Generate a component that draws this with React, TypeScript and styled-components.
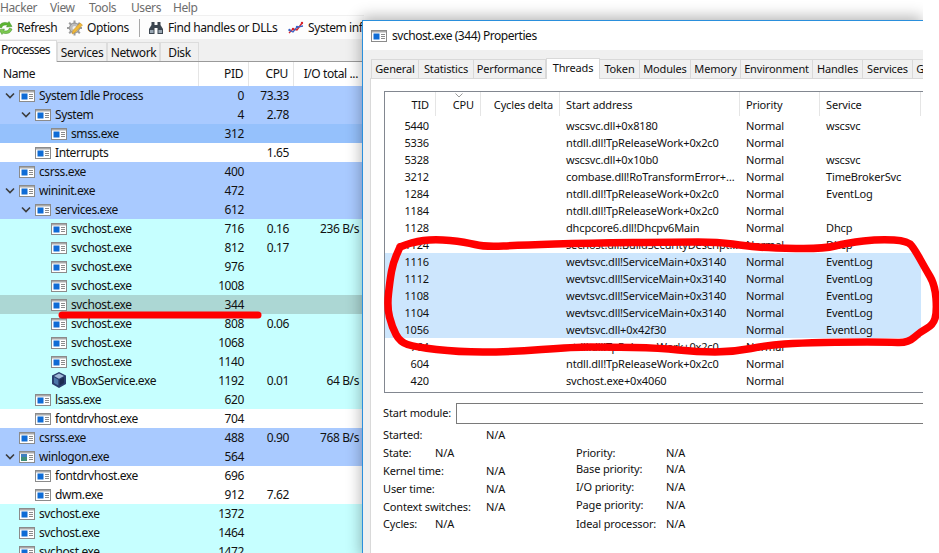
import React from 'react';
import styled, { createGlobalStyle } from 'styled-components';

const Global = createGlobalStyle`
  html, body { margin: 0; padding: 0; background: #fff; }
  #root { width: 939px; height: 553px; overflow: hidden; }
`;

const Screen = styled.div`
  position: relative;
  width: 939px;
  height: 553px;
  overflow: hidden;
  background: #fff;
  font-family: "Noto Sans", "Open Sans", sans-serif;
  color: #111;
`;

/* ---------- main window ---------- */
const MainWindow = styled.div`
  width: 364px;
  height: 553px;
  display: flex;
  flex-direction: column;
  overflow: hidden;
  font-size: 12px;
  letter-spacing: -0.4px;
`;
const MenuBar = styled.div`
  display: flex;
  flex: none;
  height: 15px;
  align-items: center;
  color: #6d6d6d;
  font-size: 12px;
  line-height: 14px;
`;
const MenuItem = styled.span<{ $w: number }>`
  width: ${p => p.$w}px;
  flex: none;
`;
const Toolbar = styled.div`
  display: flex;
  flex: none;
  align-items: center;
  box-sizing: border-box;
  height: 24px;
  background: #fdfdfd;
  border-top: 1px solid #f0f0f0;
`;
const ToolButton = styled.div<{ $w: number; $pad: number; $gap: number }>`
  flex: none;
  width: ${p => p.$w}px;
  display: flex;
  align-items: center;
  gap: ${p => p.$gap}px;
  padding-left: ${p => p.$pad}px;
  box-sizing: border-box;
  white-space: nowrap;
  overflow: hidden;
`;
const ToolSeparator = styled.div`
  flex: none;
  width: 1px;
  height: 18px;
  background: #a8a8a8;
`;
const TabStrip = styled.div`
  display: flex;
  flex: none;
  align-items: flex-end;
  box-sizing: border-box;
  height: 23px;
  background: #f0f0f0;
  border-bottom: 1px solid #9a9a9a;
`;
const MainTab = styled.div<{ $w: number; $active?: boolean }>`
  flex: none;
  width: ${p => p.$w}px;
  box-sizing: border-box;
  height: ${p => (p.$active ? 22 : 19)}px;
  margin-bottom: ${p => (p.$active ? -1 : 0)}px;
  background: ${p => (p.$active ? '#fff' : '#f0f0f0')};
  border: 1px solid #dcdcdc;
  border-bottom: none;
  ${p => (p.$active ? 'border-left: none; padding-left: 1px; letter-spacing: -0.8px;' : '')}
  text-align: ${p => (p.$active ? 'left' : 'center')};
  line-height: ${p => (p.$active ? 17 : 19)}px;
  position: relative;
  white-space: nowrap;
`;
const TreeHeader = styled.div`
  display: grid;
  flex: none;
  grid-template-columns: 199px 50px 45px 70px;
  height: 24px;
  background: #fff;
  box-sizing: border-box;
`;
const HeadCell = styled.div<{ $left?: boolean }>`
  border-right: 1px solid #e5e5e5;
  padding: 0 ${p => (p.$left ? 0 : 5)}px 0 ${p => (p.$left ? 3 : 0)}px;
  text-align: ${p => (p.$left ? 'left' : 'right')};
  line-height: 24px;
  white-space: nowrap;
`;
const TreeRow = styled.div<{ $bg: string }>`
  display: grid;
  grid-template-columns: 199px 50px 45px 70px;
  flex: none;
  height: 19px;
  line-height: 19px;
  background: ${p => p.$bg};
`;
const NameCell = styled.div<{ $level: number }>`
  display: flex;
  align-items: center;
  padding-left: ${p => 19 + p.$level * 16}px;
  gap: 4px;
  position: relative;
  white-space: nowrap;
`;
const Chevron = styled.svg`
  position: absolute;
  margin-left: -14px;
  width: 10px;
  height: 7px;
`;
const NumCell = styled.div`
  text-align: right;
  padding-right: 5px;
  white-space: nowrap;
`;

/* ---------- properties window ---------- */
const PropWindow = styled.div`
  position: absolute;
  left: 362px;
  top: 20px;
  width: 561px;
  height: 540px;
  box-sizing: border-box;
  border: 1px solid #2a8fdc;
  border-right: none;
  border-bottom: none;
  background: #f0f0f0;
  box-shadow: -1px -3px 14px rgba(0, 0, 0, 0.3);
  clip-path: inset(-20px 0 0 -20px);
  font-size: 11px;
  letter-spacing: -0.15px;
  display: flex;
  flex-direction: column;
`;
const TitleBar = styled.div`
  height: 29px;
  flex: none;
  background: #fff;
  display: flex;
  align-items: center;
  gap: 5px;
  padding: 0 0 0 8px;
  font-size: 12px;
  letter-spacing: -0.45px;
`;
const PropTabs = styled.div`
  display: flex;
  align-items: flex-end;
  height: 28px;
  flex: none;
  padding-left: 8px;
`;
const PropTab = styled.div<{ $w: number; $active?: boolean }>`
  flex: none;
  width: ${p => p.$w}px;
  box-sizing: border-box;
  height: ${p => (p.$active ? 21 : 19)}px;
  margin-bottom: ${p => (p.$active ? -1 : 0)}px;
  background: ${p => (p.$active ? '#fff' : '#f0f0f0')};
  border: 1px solid #d9d9d9;
  border-left: ${p => (p.$active ? '1px solid #d9d9d9' : 'none')};
  border-bottom: none;
  text-align: center;
  line-height: ${p => (p.$active ? 17 : 18)}px;
  position: relative;
  white-space: nowrap;
  overflow: hidden;
  &:first-child { border-left: 1px solid #d9d9d9; }
`;
const PropBody = styled.div`
  margin-left: 7px;
  flex: 1;
  background: #fff;
  border-left: 1px solid #d9d9d9;
  border-top: 1px solid #d9d9d9;
  padding: 12px 0 0 13px;
  overflow: hidden;
`;
const ThreadList = styled.div`
  width: 600px;
  height: 302px;
  box-sizing: border-box;
  border: 1px solid #828790;
  display: flex;
  flex-direction: column;
`;
const threadCols = '51px 45px 79px 180px 80px 101px';
const ThreadHeader = styled.div`
  display: grid;
  grid-template-columns: ${threadCols};
  height: 25px;
  flex: none;
`;
const ThreadHead = styled.div<{ $right?: boolean }>`
  position: relative;
  height: 24px;
  line-height: 25px;
  border-right: 1px solid #e5e5e5;
  padding: ${p => (p.$right ? '0 6px 0 0' : '0 0 0 6px')};
  text-align: ${p => (p.$right ? 'right' : 'left')};
  white-space: nowrap;
`;
const SortCaret = styled.svg`
  position: absolute;
  left: 19px;
  top: 1px;
  width: 8px;
  height: 5px;
`;
const ThreadRow = styled.div<{ $selected?: boolean }>`
  display: grid;
  grid-template-columns: ${threadCols};
  height: 17px;
  line-height: 17px;
  flex: none;
  width: 536px;
  background: ${p => (p.$selected ? '#cde6fd' : 'transparent')};
`;
const ThreadCell = styled.div<{ $right?: boolean }>`
  padding: ${p => (p.$right ? '0 7px 0 0' : '0 0 0 6px')};
  text-align: ${p => (p.$right ? 'right' : 'left')};
  white-space: nowrap;
  overflow: hidden;
`;
const ModuleRow = styled.div`
  display: flex;
  align-items: center;
  height: 21px;
  margin-top: 10px;
  margin-left: -1px;
  white-space: nowrap;
`;
const ModuleLabel = styled.div`
  width: 73px;
  flex: none;
  padding-bottom: 2px;
`;
const ModuleInput = styled.div`
  flex: none;
  width: 600px;
  height: 21px;
  box-sizing: border-box;
  border: 1px solid #7a7a7a;
`;
const StatsArea = styled.div`
  display: flex;
  margin-left: -1px;
  margin-top: 1px;
`;
const StatColumn = styled.div<{ $w: number; $top: number }>`
  width: ${p => p.$w}px;
  flex: none;
  padding-top: ${p => p.$top}px;
`;
const Stat = styled.div<{ $h: number }>`
  display: flex;
  align-items: center;
  height: ${p => p.$h}px;
  white-space: nowrap;
`;
const StatLabel = styled.span<{ $w: number }>`
  width: ${p => p.$w}px;
  flex: none;
`;

const Annotation = styled.svg`
  position: absolute;
  left: 0;
  top: 0;
  width: 939px;
  height: 553px;
  pointer-events: none;
`;

/* ---------- icons ---------- */
const ProcIcon = ({ alt }: { alt?: boolean }) => (
  <svg width="16" height="12" viewBox="0 0 16 12" style={{ flex: 'none' }}>
    <rect x="0.5" y="0.5" width="15" height="11" fill="#fff" stroke="#8b8b8b" />
    <rect x="1" y="1" width="14" height="1.5" fill="#a9a9a9" />
    {alt ? (
      <>
        <rect x="2" y="3" width="6" height="7" fill="#3f8f7a" />
        <rect x="2" y="3" width="6" height="3" fill="#3f7fbf" />
      </>
    ) : (
      <rect x="2.5" y="3.5" width="6" height="6" fill="#0f6cd6" />
    )}
    <path d="M10 4.5h4M10 6.5h4M10 8.5h4" stroke="#8a8a8a" />
  </svg>
);
const VBoxIcon = () => (
  <svg width="16" height="18" viewBox="0 0 16 18" style={{ flex: 'none', marginTop: -1 }}>
    <path d="M8 1 15 4.5V13L8 17 1 13V4.5Z" fill="#2a3f6e" />
    <path d="M8 2.5 13 5 8 7.8 3 5Z" fill="#9fb8d8" />
    <path d="M3 6.2 7.3 8.8V14.5L3 12Z" fill="#4c76a8" />
    <path d="M13 6.2 8.7 8.8V14.5L13 12Z" fill="#1c2b50" />
  </svg>
);
const RefreshIcon = () => (
  <svg width="15" height="16" viewBox="0 0 15 16" style={{ flex: 'none', marginLeft: -2 }}>
    <path d="M1 7C2 3 6 1.500 10 3L11 1.500 14 6.500 8.500 7 9.500 5.500C7 4.500 4.500 5 3.500 8Z" fill="#5cb531" stroke="#3d8a22" strokeWidth=".5" />
    <path d="M14 9C13 13 9 14.500 5 13L4 14.500 1 9.500 6.500 9 5.500 10.500C8 11.500 10.500 11 11.500 8Z" fill="#7cc850" stroke="#3d8a22" strokeWidth=".5" />
  </svg>
);
const OptionsIcon = () => (
  <svg width="16" height="16" viewBox="0 0 16 16" style={{ flex: 'none' }}>
    <circle cx="7.500" cy="8" r="5" fill="#bdbdbd" stroke="#8a8a8a" />
    <path d="M7.500 0.500v3M7.500 12.500v3M0 8h3M12 8h3M2.200 2.700l2 2M10.800 11.300l2 2M2.200 13.300l2-2M10.800 4.700l2-2" stroke="#9c9c9c" strokeWidth="2" />
    <circle cx="7.500" cy="8" r="2" fill="#efefef" />
    <path d="M5 14 6 10.500 13 3 15.500 5 8 12.500Z" fill="#f0b93a" stroke="#c28a1f" strokeWidth=".5" />
  </svg>
);
const BinocularsIcon = () => (
  <svg width="14" height="14" viewBox="0 0 14 14" style={{ flex: 'none' }}>
    <path d="M2.500 1h3v3h3V1h3v3L14 8v5H8.500V7h-3v6H0V8l2.500-4Z" fill="#3c4650" />
    <rect x="1" y="9" width="3.500" height="3" fill="#9aa7b3" />
    <rect x="9.500" y="9" width="3.500" height="3" fill="#9aa7b3" />
  </svg>
);
const ChartIcon = () => (
  <svg width="16" height="14" viewBox="0 0 16 14" style={{ flex: 'none' }}>
    <path d="M1 12 5 8 9 9 14 2" fill="none" stroke="#d8232a" strokeWidth="1.300" />
    <path d="M1 9 5 11 9 6 15 5" fill="none" stroke="#3a62c4" strokeWidth="1.300" />
    <g fill="#d8232a"><circle cx="5" cy="8" r="1.200" /><circle cx="14" cy="2" r="1.200" /></g>
    <g fill="#3a62c4"><circle cx="1.500" cy="9" r="1.200" /><circle cx="9" cy="6" r="1.200" /></g>
  </svg>
);

/* ---------- data ---------- */
const BLUE = '#a9caff';
const BLUE2 = '#95c1fc';
const CYAN = '#c6ffff';
const WHITE = '#ffffff';
const SEL = '#acd7d4';
type P = [string, number, boolean, string, string, string, string, ('vbox' | 'alt')?];
const processes: P[] = [
  ['System Idle Process', 0, true, '0', '73.33', '', BLUE],
  ['System', 1, true, '4', '2.78', '', BLUE],
  ['smss.exe', 2, false, '312', '', '', BLUE2],
  ['Interrupts', 1, false, '', '1.65', '', WHITE],
  ['csrss.exe', 0, false, '400', '', '', BLUE],
  ['wininit.exe', 0, true, '472', '', '', BLUE],
  ['services.exe', 1, true, '612', '', '', BLUE],
  ['svchost.exe', 2, false, '716', '0.16', '236 B/s', CYAN],
  ['svchost.exe', 2, false, '812', '0.17', '', CYAN],
  ['svchost.exe', 2, false, '976', '', '', CYAN],
  ['svchost.exe', 2, false, '1008', '', '', CYAN],
  ['svchost.exe', 2, false, '344', '', '', SEL],
  ['svchost.exe', 2, false, '808', '0.06', '', CYAN],
  ['svchost.exe', 2, false, '1068', '', '', CYAN],
  ['svchost.exe', 2, false, '1140', '', '', CYAN],
  ['VBoxService.exe', 2, false, '1192', '0.01', '64 B/s', CYAN, 'vbox'],
  ['lsass.exe', 1, false, '620', '', '', CYAN],
  ['fontdrvhost.exe', 1, false, '704', '', '', WHITE],
  ['csrss.exe', 0, false, '488', '0.90', '768 B/s', BLUE],
  ['winlogon.exe', 0, true, '564', '', '', BLUE, 'alt'],
  ['fontdrvhost.exe', 1, false, '696', '', '', WHITE],
  ['dwm.exe', 1, false, '912', '7.62', '', WHITE],
  ['svchost.exe', 0, false, '1372', '', '', CYAN],
  ['svchost.exe', 0, false, '1464', '', '', CYAN],
  ['svchost.exe', 0, false, '1472', '', '', CYAN],
];
const threads: [string, string, string, boolean?][] = [
  ['5440', 'wscsvc.dll+0x8180', 'wscsvc'],
  ['5336', 'ntdll.dll!TpReleaseWork+0x2c0', ''],
  ['5328', 'wscsvc.dll+0x10b0', 'wscsvc'],
  ['3212', 'combase.dll!RoTransformError+…', 'TimeBrokerSvc'],
  ['1284', 'ntdll.dll!TpReleaseWork+0x2c0', 'EventLog'],
  ['1184', 'ntdll.dll!TpReleaseWork+0x2c0', ''],
  ['1128', 'dhcpcore6.dll!Dhcpv6Main', 'Dhcp'],
  ['1124', 'sechost.dll!BuildSecurityDescript…', 'Dhcp'],
  ['1116', 'wevtsvc.dll!ServiceMain+0x3140', 'EventLog', true],
  ['1112', 'wevtsvc.dll!ServiceMain+0x3140', 'EventLog', true],
  ['1108', 'wevtsvc.dll!ServiceMain+0x3140', 'EventLog', true],
  ['1104', 'wevtsvc.dll!ServiceMain+0x3140', 'EventLog', true],
  ['1056', 'wevtsvc.dll+0x42f30', 'EventLog', true],
  ['764', 'ntdll.dll!TpReleaseWork+0x2c0', ''],
  ['604', 'ntdll.dll!TpReleaseWork+0x2c0', ''],
  ['420', 'svchost.exe+0x4060', ''],
];
const propTabs: [string, number][] = [
  ['General', 48], ['Statistics', 55], ['Performance', 72], ['Threads', 54], ['Token', 40],
  ['Modules', 51], ['Memory', 50], ['Environment', 72], ['Handles', 50], ['Services', 50], ['GPU', 30],
];
const scribble: [number, number][] = [
  [400, 247], [412, 242], [435, 239], [465, 242], [485, 247], [522, 245], [588, 243], [678, 242], [718, 242],
  [747, 246], [769, 248], [823, 249], [847, 243], [880, 239], [908, 241], [915, 250], [925, 268], [935, 285],
  [937, 312], [933, 325], [920, 332], [908, 343], [887, 342], [847, 342], [800, 343], [769, 345], [733, 352],
  [697, 352], [660, 348], [606, 347], [575, 347], [508, 352], [458, 352], [415, 347], [400, 342], [392, 327],
  [387, 307], [390, 280], [393, 263], [400, 247],
];
const smooth = (pts: [number, number][]) => {
  let d = `M${pts[0][0]} ${pts[0][1]}`;
  for (let i = 1; i < pts.length - 1; i++) {
    const mx = (pts[i][0] + pts[i + 1][0]) / 2;
    const my = (pts[i][1] + pts[i + 1][1]) / 2;
    d += ` Q${pts[i][0]} ${pts[i][1]} ${mx} ${my}`;
  }
  const l = pts[pts.length - 1];
  return `${d} L${l[0]} ${l[1]}`;
};

export default function App() {
  return (
    <Screen>
      <Global />
      <MainWindow>
        <MenuBar>
          <MenuItem $w={50}>Hacker</MenuItem>
          <MenuItem $w={39}>View</MenuItem>
          <MenuItem $w={42}>Tools</MenuItem>
          <MenuItem $w={42}>Users</MenuItem>
          <MenuItem $w={40}>Help</MenuItem>
        </MenuBar>
        <Toolbar>
          <ToolButton $w={67} $pad={0} $gap={4}><RefreshIcon />Refresh</ToolButton>
          <ToolButton $w={72} $pad={0} $gap={4}><OptionsIcon />Options</ToolButton>
          <ToolSeparator />
          <ToolButton $w={148} $pad={9} $gap={5}><BinocularsIcon />Find handles or DLLs</ToolButton>
          <ToolButton $w={74} $pad={0} $gap={4}><ChartIcon />System information</ToolButton>
        </Toolbar>
        <TabStrip>
          <MainTab $w={57} $active>Processes</MainTab>
          <MainTab $w={50}>Services</MainTab>
          <MainTab $w={53}>Network</MainTab>
          <MainTab $w={39}>Disk</MainTab>
        </TabStrip>
        <TreeHeader>
          <HeadCell $left>Name</HeadCell>
          <HeadCell>PID</HeadCell>
          <HeadCell>CPU</HeadCell>
          <HeadCell>I/O total ...</HeadCell>
        </TreeHeader>
        {processes.map(([name, level, open, pid, cpu, io, bg, icon], i) => (
          <TreeRow key={i} $bg={bg}>
            <NameCell $level={level}>
              {open && (
                <Chevron viewBox="0 0 10 7">
                  <path d="M1 1.500 5 5.500 9 1.500" fill="none" stroke="#3c3c3c" strokeWidth="1.600" />
                </Chevron>
              )}
              {icon === 'vbox' ? <VBoxIcon /> : <ProcIcon alt={icon === 'alt'} />}
              {name}
            </NameCell>
            <NumCell>{pid}</NumCell>
            <NumCell>{cpu}</NumCell>
            <NumCell>{io}</NumCell>
          </TreeRow>
        ))}
      </MainWindow>

      <PropWindow>
        <TitleBar><ProcIcon />svchost.exe (344) Properties</TitleBar>
        <PropTabs>
          {propTabs.map(([t, w]) => (
            <PropTab key={t} $w={w} $active={t === 'Threads'}>{t}</PropTab>
          ))}
        </PropTabs>
        <PropBody>
          <ThreadList>
            <ThreadHeader>
              <ThreadHead $right>TID</ThreadHead>
              <ThreadHead $right>
                <SortCaret viewBox="0 0 8 5"><path d="M.5 .5 4 4 7.500 .5" fill="none" stroke="#9a9a9a" /></SortCaret>
                CPU
              </ThreadHead>
              <ThreadHead $right>Cycles delta</ThreadHead>
              <ThreadHead>Start address</ThreadHead>
              <ThreadHead>Priority</ThreadHead>
              <ThreadHead>Service</ThreadHead>
            </ThreadHeader>
            {threads.map(([tid, addr, svc, sel]) => (
              <ThreadRow key={tid} $selected={sel}>
                <ThreadCell $right>{tid}</ThreadCell>
                <ThreadCell />
                <ThreadCell />
                <ThreadCell>{addr}</ThreadCell>
                <ThreadCell>Normal</ThreadCell>
                <ThreadCell>{svc}</ThreadCell>
              </ThreadRow>
            ))}
          </ThreadList>
          <ModuleRow>
            <ModuleLabel>Start module:</ModuleLabel>
            <ModuleInput />
          </ModuleRow>
          <StatsArea>
            <StatColumn $w={193} $top={0}>
              <Stat $h={18}><StatLabel $w={103}>Started:</StatLabel>N/A</Stat>
              <Stat $h={18}><StatLabel $w={52}>State:</StatLabel>N/A</Stat>
              <Stat $h={19}><StatLabel $w={103}>Kernel time:</StatLabel>N/A</Stat>
              <Stat $h={17}><StatLabel $w={103}>User time:</StatLabel>N/A</Stat>
              <Stat $h={18}><StatLabel $w={103}>Context switches:</StatLabel>N/A</Stat>
              <Stat $h={17}><StatLabel $w={52}>Cycles:</StatLabel>N/A</Stat>
            </StatColumn>
            <StatColumn $w={180} $top={18}>
              <Stat $h={18}><StatLabel $w={90}>Priority:</StatLabel>N/A</Stat>
              <Stat $h={14}><StatLabel $w={90}>Base priority:</StatLabel>N/A</Stat>
              <Stat $h={22}><StatLabel $w={90}>I/O priority:</StatLabel>N/A</Stat>
              <Stat $h={14}><StatLabel $w={90}>Page priority:</StatLabel>N/A</Stat>
              <Stat $h={24}><StatLabel $w={90}>Ideal processor:</StatLabel>N/A</Stat>
            </StatColumn>
          </StatsArea>
        </PropBody>
      </PropWindow>

      <Annotation viewBox="0 0 939 553">
        <path d="M62 315H258" stroke="#ff0000" strokeWidth="7" strokeLinecap="round" fill="none" />
        <path d={smooth(scribble)} stroke="#ff0000" strokeWidth="7.500" strokeLinejoin="round" strokeLinecap="round" fill="none" />
      </Annotation>
    </Screen>
  );
}
